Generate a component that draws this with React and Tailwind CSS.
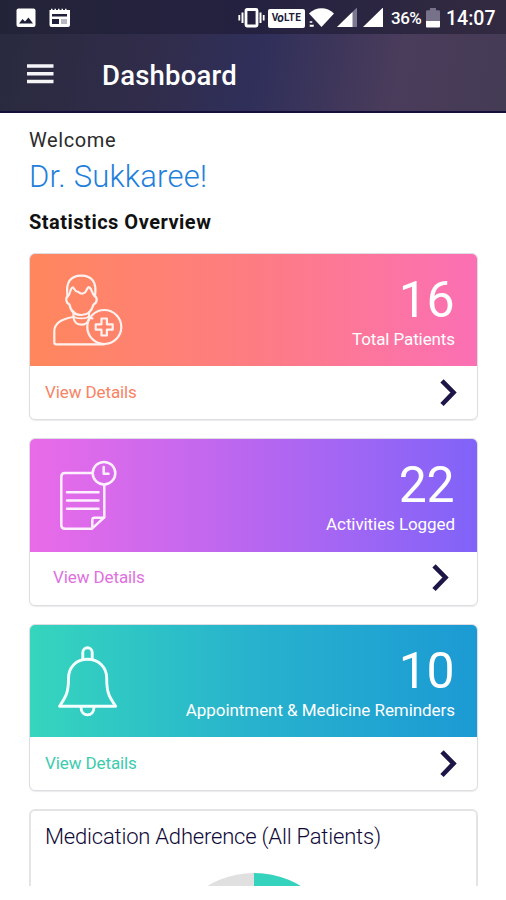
import React from 'react';

//patient icon (head + shoulders + plus badge)
function PatientIcon() {
  return (
    <svg width="74" height="76" viewBox="0 0 74 76" fill="none" stroke="#fff2ee" strokeWidth="2.2" strokeLinejoin="round" strokeLinecap="round">
      <path d="M15.500 23C13.500 10 18 2.700 29.300 2.700S45 10 43 23" />
      <path d="M16 23C18.500 21.500 18 15 20.500 14.500C22 14 22.500 18.500 25 18.500C27 18.500 26.500 20 29 20.500C32 21 34 19 34.500 17C36 14.500 36.500 13.500 37.500 14.500C40 16 40 21 42.700 23" />
      <path d="M16 23C13.500 24.500 13.500 29.500 17.500 31.500C18.500 37.500 22 42 29.300 42S40 37.500 41.500 31.500C45.500 29.500 45.500 24.500 42.700 23" />
      <path d="M21.500 38.500V44.500C22.500 54 36 54 37 45V39" />
      <path d="M22 43.500C24 46 34.500 46 36.500 43.500" strokeWidth="1.600" />
      <path d="M21 44C9 46 2.500 51 2.300 58V69.500Q2.300 71.300 4.300 71.300H52.300M37 44.500L40.500 45.500" />
      <circle cx="52.300" cy="54" r="17" />
      <path d="M49.500 45.500h5.400v5.800h5.800v5.400h-5.800v5.800h-5.400v-5.800h-5.800v-5.400h5.800z" />
    </svg>
  );
}

//activity log icon (paper + clock)
function ActivityIcon() {
  return (
    <svg width="74" height="76" viewBox="0 0 74 76" fill="none" stroke="#fff0ff" strokeWidth="2.500" strokeLinejoin="round" strokeLinecap="round">
      <path d="M34.500 15H7Q3.300 15 3.300 18.700V67Q3.300 70.700 7 70.700H34L46.300 59.300V27" />
      <path d="M34.300 70V62Q34.300 59.800 36.500 59.800H46" />
      <path d="M9 34.200H40.500M9 42.500H40.500M9 50.700H40.500" />
      <circle cx="46" cy="15.200" r="11.300" />
      <path d="M45.700 9V15.800H50.500" />
    </svg>
  );
}

//reminder bell icon
function BellIcon() {
  return (
    <svg width="74" height="76" viewBox="0 0 74 76" fill="none" stroke="#f4ffff" strokeWidth="2.900" strokeLinejoin="round" strokeLinecap="round">
      <path d="M26.800 15.500V8.500C26.800 2.200 36.200 2.200 36.200 8.500V15.500" />
      <path d="M31.500 15.300C20 15.300 12.500 23.500 12.500 34C12.500 48 10.500 52 3.500 62.300H59.700C52.500 52 50.700 48 50.700 34C50.700 23.500 43 15.300 31.500 15.300Z" />
      <path d="M25 63C25 73.500 38 73.500 38 63" />
    </svg>
  );
}

//top phone status bar
function StatusBar() {
  return (
    <div className="flex h-[34px] items-center bg-linear-to-r from-[#232338] via-[#242140] to-[#322a40] pl-[16px] pr-[10px] pt-[2px] text-white">
      <svg width="20" height="20" viewBox="0 0 20 20">
        <rect x="0.500" y="0.500" width="19" height="18.500" rx="2" fill="#fff" />
        <path d="M3 15.500L6.500 11L9 13.500L12.500 9.500L17 15.500Z" fill="#20203a" />
      </svg>
      <svg className="ml-[13px]" width="21" height="20" viewBox="0 0 21 20">
        <path d="M0.500 2H2V0.800H3.500V2H5.500V0.800H7V2H9V0.800H10.500V2H12.500V0.800H14V2H16V0.800H17.500V2H21V17Q21 19 19 19H2.500Q0.500 19 0.500 17Z" fill="#fff" />
        <path d="M3 6H18V8.500H3ZM3 11H10V16H3Z" fill="#20203a" />
        <path d="M12 11H18V16H12Z" fill="#b9b9c2" />
      </svg>

      <div className="ml-auto flex items-center">
        {/* vibrate */}
        <svg width="27" height="20" viewBox="0 0 27 20" fill="none" stroke="#fff">
          <rect x="8" y="1.500" width="11" height="16.500" rx="1" strokeWidth="2.800" />
          <path d="M4.500 4.500V15M22.500 4.500V15" strokeWidth="2" />
          <path d="M1.300 7V12.500M25.700 7V12.500" strokeWidth="1.800" />
        </svg>
        <div className="ml-[3px] flex h-[19px] w-[37px] items-center justify-center rounded-[2px] bg-white text-[10px] font-bold leading-none text-[#20203a]">
          <span>V</span>
          <span className="-ml-px text-[12px] italic">o</span>
          <span className="tracking-[0.4px]">LTE</span>
        </div>
        {/* wifi */}
        <svg className="ml-[4px]" width="25" height="20" viewBox="0 0 25 20" fill="#fff">
          <path d="M0 5.500C7 -1.500 18 -1.500 25 5.500L12.500 19Z" />
          <path d="M0.500 13H3.500V15H0.500ZM0.500 16.500H5V19H0.500Z" stroke="#242140" strokeWidth="0.500" />
        </svg>
        {/* signals */}
        <svg className="ml-[3px]" width="20" height="20" viewBox="0 0 20 20">
          <path d="M0 19L20 -0.500V19Z" fill="#7c7890" />
          <path d="M0 19L15.500 4V19Z" fill="#fff" />
        </svg>
        <svg className="ml-[6px]" width="20" height="20" viewBox="0 0 20 20">
          <path d="M0 19L20 -0.500V19Z" fill="#fff" />
        </svg>
        <span className="ml-[8px] w-[32px] whitespace-nowrap text-[17px] font-medium leading-none tracking-[-0.5px]">36%</span>
        {/* battery */}
        <svg className="ml-[3px]" width="14" height="21" viewBox="0 0 14 21">
          <path d="M0 3.500Q0 2.200 1.200 2.200H4V0H10V2.200H12.800Q14 2.200 14 3.500V13H0Z" fill="#77718a" />
          <path d="M0 13H14V18.500Q14 19.500 13 19.500H1Q0 19.500 0 18.500Z" fill="#fff" />
        </svg>
        <span className="ml-[6px] w-[50px] whitespace-nowrap pt-px text-[19.500px] font-medium leading-none">14:07</span>
      </div>
    </div>
  );
}

//statistics cards data
const cards = [
  {
    count: 16,
    title: 'Total Patients',
    titleStyle: 'tracking-[-0.1px]',
    icon: <PatientIcon />,
    gradient: 'from-[#ff875c] via-[#fd7c82] to-[#fb6fb4]',
    link: 'text-[#f98263]',
    footer: 'pl-[15px] pr-[20px]',
    iconBox: 'ml-[22px]',
  },
  {
    count: 22,
    title: 'Activities Logged',
    titleStyle: 'tracking-[-0.08px]',
    icon: <ActivityIcon />,
    gradient: 'from-[#e96be8] via-[#b866f0] to-[#8063f8]',
    link: 'text-[#e06fe0]',
    footer: 'pl-[23px] pr-[28px]',
    iconBox: 'ml-[28px]',
  },
  {
    count: 10,
    title: 'Appointment & Medicine Reminders',
    titleStyle: 'tracking-[-0.06px]',
    icon: <BellIcon />,
    gradient: 'from-[#36d5bd] via-[#28b2cd] to-[#1c9ad4]',
    link: 'text-[#3ccbae]',
    footer: 'pl-[15px] pr-[20px]',
    iconBox: 'ml-[26px]',
  },
];

function StatCard({ card }) {
  return (
    <div className="h-[167.600px] overflow-hidden rounded-[6px] border border-[#dedee2] bg-white shadow-[0_1px_1px_rgba(0,0,0,0.08)]">
      <div className={`flex h-[112.500px] justify-between bg-linear-to-r ${card.gradient}`}>
        <div className={`pt-[19px] ${card.iconBox}`}>{card.icon}</div>
        <div className="pr-[22px] pt-[20px] text-right text-white">
          <div className="pr-px text-[50px] leading-[52px] tracking-[-0.5px]">{card.count}</div>
          <div className={`mt-[3px] whitespace-nowrap text-[17px] leading-[20px] ${card.titleStyle}`}>{card.title}</div>
        </div>
      </div>
      <div className={`flex h-[53px] items-center justify-between ${card.footer}`}>
        <span className={`text-[17px] tracking-[-0.1px] ${card.link}`}>View Details</span>
        <svg width="17" height="28" viewBox="0 0 17 28" fill="none" stroke="#1d1646" strokeWidth="4.600">
          <path d="M2 1.800L13.500 13.500L2 25.500" />
        </svg>
      </div>
    </div>
  );
}

function App() {
  return (
    <div className="h-[900px] w-[506px] overflow-hidden bg-white font-[Roboto,sans-serif]">
      <div className="h-[886px] overflow-hidden">
        <StatusBar />

        {/* Header */}
        <div className="flex h-[79px] items-center border-b-2 border-[#15103a] bg-[linear-gradient(100deg,#292a3e_0%,#302c4a_30%,#2f2f5a_50%,#4a3c5b_78%,#443b55_100%)] pl-[27px] pt-[3px]">
          <svg width="27" height="20" viewBox="0 0 27 20" stroke="#f5f5f8" strokeWidth="3.500">
            <path d="M0 2H26.500M0 9.700H26.500M0 17.400H26.500" />
          </svg>
          <h1 className="ml-[48px] pt-[3px] text-[27.500px] font-medium leading-none tracking-[0.2px] text-white">Dashboard</h1>
        </div>

        {/* Main content */}
        <div className="pl-[29px] pr-[28px] pt-[15px]">
          <div className="text-[20px] leading-[24px] tracking-[0.6px] text-[#2b2b2b]">Welcome</div>
          <div className="mt-[7px] text-[31px] font-light leading-[36px] tracking-[0.2px] text-[#1f80dc]">Dr. Sukkaree!</div>
          <div className="mt-[15px] text-[20px] font-bold leading-[24px] tracking-[0.5px] text-[#111]">Statistics Overview</div>

          <div className="mt-[18.500px] flex flex-col gap-[18px]">
            {cards.map((card) => (
              <StatCard key={card.title} card={card} />
            ))}

            {/* Medication chart */}
            <div className="h-[300px] rounded-[6px] border-2 border-[#e4e4e6] bg-white">
              <div className="pl-[14px] pt-[12px] text-[22px] font-light leading-[28px] tracking-[-0.2px] text-[#100a38]">
                Medication Adherence (All Patients)
              </div>
              <svg className="mx-auto mt-[22px]" width="180" height="180" viewBox="0 0 180 180">
                <circle cx="90" cy="90" r="90" fill="#e0e0e0" />
                <path d="M90 90V0A90 90 0 0 1 180 90Z" fill="#35d3be" />
              </svg>
            </div>
          </div>
        </div>
      </div>
    </div>
  );
}

export default App;
